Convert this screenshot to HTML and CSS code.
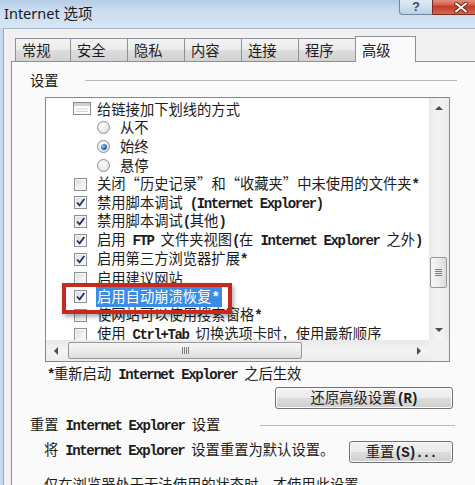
FILE: index.html
```html
<!DOCTYPE html>
<html lang="zh-CN">
<head>
    <meta charset="UTF-8">
    <title>Internet 选项</title>
    <link rel="stylesheet" href="styles.css">
</head>
<body>
    <div class="window">
        <div class="titlebar">
            <span class="title">Internet 选项</span>
            <div class="caption">
                <span class="cap-help">?</span>
                <span class="cap-close">
                    <svg width="14" height="11" viewBox="0 0 14 11">
                        <path d="M2 1.5l10 8M12 1.5l-10 8" stroke="#6e1d14" stroke-width="3.6" stroke-linecap="round"/>
                        <path d="M2 1.5l10 8M12 1.5l-10 8" stroke="#fff" stroke-width="2" stroke-linecap="round"/>
                    </svg>
                </span>
            </div>
        </div>

        <div class="frame">
            <div class="dialog">
                <div class="tabs">
                    <div class="tab first">常规</div>
                    <div class="tab">安全</div>
                    <div class="tab">隐私</div>
                    <div class="tab">内容</div>
                    <div class="tab">连接</div>
                    <div class="tab">程序</div>
                    <div class="tab active">高级</div>
                </div>

                <div class="panel">
                    <div class="group">
                        <span>设置</span>
                        <span class="rule rule-settings"></span>
                    </div>

                    <div class="list">
                        <div class="list-body">
                            <div class="rows">
                                <div class="row">
                                    <svg class="gicon" width="18" height="13" viewBox="0 0 18 13">
                                        <rect x="0.5" y="0.5" width="17" height="12" fill="#fff" stroke="#8c8c8c"/>
                                        <rect x="1" y="1" width="16" height="3" fill="#c4d2e2"/>
                                        <path d="M3 7h12M3 9.5h12" stroke="#d4d4d4"/>
                                    </svg>
                                    <span>给链接加下划线的方式</span>
                                </div>
                                <div class="row sub">
                                    <span class="radio"></span>
                                    <span>从不</span>
                                </div>
                                <div class="row sub">
                                    <span class="radio"><span class="dot"></span></span>
                                    <span>始终</span>
                                </div>
                                <div class="row sub">
                                    <span class="radio"></span>
                                    <span>悬停</span>
                                </div>
                                <div class="row">
                                    <span class="cb"></span>
                                    <span>关闭<span class="q ql">“</span>历史记录<span class="q qr">”</span>和<span class="q ql">“</span>收藏夹<span class="q qr">”</span>中未使用的文件夹<span class="lat">*</span></span>
                                </div>
                                <div class="row">
                                    <span class="cb"><svg width="11" height="11" viewBox="0 0 11 11"><path d="M2 5.5l2.6 2.8L9.3 2" fill="none" stroke="#1d3363" stroke-width="1.8"/></svg></span>
                                    <span>禁用脚本调试<span class="lat"> (Internet Explorer)</span></span>
                                </div>
                                <div class="row">
                                    <span class="cb"><svg width="11" height="11" viewBox="0 0 11 11"><path d="M2 5.5l2.6 2.8L9.3 2" fill="none" stroke="#1d3363" stroke-width="1.8"/></svg></span>
                                    <span>禁用脚本调试<span class="lat">(</span>其他<span class="lat">)</span></span>
                                </div>
                                <div class="row">
                                    <span class="cb"><svg width="11" height="11" viewBox="0 0 11 11"><path d="M2 5.5l2.6 2.8L9.3 2" fill="none" stroke="#1d3363" stroke-width="1.8"/></svg></span>
                                    <span>启用<span class="lat"> FTP </span>文件夹视图<span class="lat">(</span>在<span class="lat"> Internet Explorer </span>之外<span class="lat">)</span></span>
                                </div>
                                <div class="row">
                                    <span class="cb"><svg width="11" height="11" viewBox="0 0 11 11"><path d="M2 5.5l2.6 2.8L9.3 2" fill="none" stroke="#1d3363" stroke-width="1.8"/></svg></span>
                                    <span>启用第三方浏览器扩展<span class="lat">*</span></span>
                                </div>
                                <div class="row">
                                    <span class="cb"></span>
                                    <span>启用建议网站</span>
                                </div>
                                <div class="row marked">
                                    <span class="cb"><svg width="11" height="11" viewBox="0 0 11 11"><path d="M2 5.5l2.6 2.8L9.3 2" fill="none" stroke="#1d3363" stroke-width="1.8"/></svg></span>
                                    <span class="sel">启用自动崩溃恢复<span class="lat">*</span></span>
                                    <span class="mark"></span>
                                </div>
                                <div class="row">
                                    <span class="cb"></span>
                                    <span>使网站可以使用搜索窗格<span class="lat">*</span></span>
                                </div>
                                <div class="row">
                                    <span class="cb"></span>
                                    <span>使用<span class="lat"> Ctrl+Tab </span>切换选项卡时，使用最新顺序</span>
                                </div>
                            </div>

                            <div class="vscroll">
                                <div class="sb-btn"><span class="arr-up"></span></div>
                                <div class="v-track">
                                    <div class="v-thumb"><span class="grip-h"></span></div>
                                </div>
                                <div class="sb-btn"><span class="arr-down"></span></div>
                            </div>
                        </div>

                        <div class="hscroll">
                            <div class="hbar">
                                <div class="sb-btn"><span class="arr-left"></span></div>
                                <div class="h-track">
                                    <div class="h-thumb"><span class="grip-v"></span></div>
                                </div>
                                <div class="sb-btn"><span class="arr-right"></span></div>
                            </div>
                            <div class="corner"></div>
                        </div>
                    </div>

                    <div class="note"><span class="lat">*</span>重新启动<span class="lat"> Internet Explorer </span>之后生效</div>

                    <div class="btn-row">
                        <button class="btn btn-restore">还原高级设置<span class="lat">(R)</span></button>
                    </div>

                    <div class="group group-reset">
                        <span>重置<span class="lat"> Internet Explorer </span>设置</span>
                        <span class="rule rule-reset"></span>
                    </div>

                    <div class="reset-row">
                        <span class="reset-text">将<span class="lat"> Internet Explorer </span>设置重置为默认设置。</span>
                        <button class="btn btn-reset">重置<span class="lat">(S)...</span></button>
                    </div>

                    <p class="hint">仅在浏览器处于无法使用的状态时，才使用此设置。</p>
                </div>
            </div>
        </div>
    </div>
</body>
</html>
```

FILE: styles.css
```css
* {
    box-sizing: border-box;
}
body {
    margin: 0;
    width: 475px;
    height: 485px;
    overflow: hidden;
    background-color: #f0f0f0;
    font-family: "Noto Sans CJK SC", sans-serif;
    font-size: 14.3px;
    color: #1c1c1c;
}
.lat {
    font-family: "Liberation Mono", monospace;
    font-size: 14px;
    font-weight: bold;
    letter-spacing: -1.4px;
}
.window {
    width: 475px;
    height: 485px;
    overflow: hidden;
}

/* title bar */
.titlebar {
    height: 28px;
    display: flex;
    justify-content: space-between;
    align-items: flex-start;
    background: linear-gradient(180deg, #b4cce6 0%, #cadcf0 35%, #d8e6f5 100%);
}
.title {
    font-family: "Noto Sans", "Noto Sans CJK SC", sans-serif;
    font-size: 14.5px;
    line-height: 18px;
    padding: 4px 0 0 4px;
    color: #1a1a1a;
}
.caption {
    display: flex;
    margin-top: -4px;
    margin-right: -15px;
}
.cap-help {
    width: 33px;
    height: 19px;
    border: 1px solid #6f86a2;
    border-right: none;
    border-radius: 0 0 0 4px;
    background: linear-gradient(180deg, #e6eef8 0%, #d3e1f0 50%, #bcd0e6 100%);
    font-family: "Liberation Sans", sans-serif;
    font-weight: bold;
    font-size: 13px;
    line-height: 19px;
    text-align: center;
    color: #3b4b5e;
}
.cap-close {
    width: 58px;
    height: 19px;
    border: 1px solid #7b2b22;
    border-radius: 0 0 4px 0;
    background: linear-gradient(180deg, #e9a899 0%, #d8644f 45%, #c43a27 55%, #d06a52 100%);
    display: flex;
    justify-content: center;
    align-items: center;
    padding-top: 3px;
}

/* dialog frame */
.frame {
    display: flex;
    height: 457px;
    padding-left: 3px;
    background-color: #c6d9ee;
}
.dialog {
    flex: 1;
    background-color: #f0f0f0;
    border-left: 1px solid #98a8b9;
    border-top: 1px solid #a9b6c3;
    padding: 7px 0 0 7px;
}

/* tabs */
.tabs {
    display: flex;
    align-items: flex-end;
    height: 25px;
    padding-left: 4px;
}
.tab {
    width: 58px;
    height: 23px;
    margin-left: -1px;
    border: 1px solid #8c9097;
    border-bottom: none;
    background: linear-gradient(180deg, #f3f3f3 0%, #ebebeb 50%, #dddddd 51%, #d2d2d2 100%);
    padding-left: 6px;
    line-height: 21px;
}
.tab.first {
    width: 56px;
    margin-left: 0;
}
.tab.active {
    width: 61px;
    height: 26px;
    margin-bottom: -1px;
    padding-top: 2px;
    background: #fafafa;
    position: relative;
    z-index: 1;
}

/* panel */
.panel {
    height: 430px;
    background-color: #fafafa;
    border: 1px solid #8c9097;
    border-right: none;
    padding-left: 18px;
}
.group {
    display: flex;
    align-items: center;
    width: 427px;
    height: 20px;
    margin-top: 8px;
    line-height: 20px;
}
.rule {
    flex: 1;
    height: 1px;
    background-color: #b4b9be;
}
.rule-settings {
    margin-left: 26px;
}
.rule-reset {
    margin-left: 40px;
}
.group-reset {
    width: 425px;
    margin-top: 6px;
}

/* list box */
.list {
    width: 405px;
    height: 265px;
    margin: 7px 0 0 15px;
    border: 1px solid #84888f;
    background-color: #fff;
    display: flex;
    flex-direction: column;
}
.list-body {
    display: flex;
    height: 242px;
}
.rows {
    flex: 1;
    overflow: hidden;
    padding-top: 1.6px;
}
.row {
    display: flex;
    align-items: center;
    height: 18.8px;
    line-height: 18.8px;
    white-space: nowrap;
}
.gicon {
    margin: 0 6px 0 27px;
    flex-shrink: 0;
}
.cb {
    width: 13px;
    height: 13px;
    margin: 0 10px 0 28px;
    flex-shrink: 0;
    border: 1px solid #8e8f8f;
    background: linear-gradient(135deg, #d6d9de 0%, #f0f1f3 60%, #fbfbfb 100%);
    box-shadow: inset 0 0 0 1px #f7f7f7;
    display: flex;
    align-items: center;
    justify-content: center;
}
.radio {
    width: 13px;
    height: 13px;
    margin: 0 10px 0 51px;
    flex-shrink: 0;
    border: 1px solid #8e8f8f;
    border-radius: 50%;
    background: radial-gradient(circle at 40% 35%, #ffffff 0%, #eaeaea 55%, #cfcfcf 100%);
    display: flex;
    align-items: center;
    justify-content: center;
}
.dot {
    width: 6px;
    height: 6px;
    border-radius: 50%;
    background: radial-gradient(circle at 35% 35%, #9cc9f5 0%, #2767b8 55%, #0c3a78 100%);
}
.q {
    display: inline-block;
    width: 1em;
}
.ql {
    text-align: right;
}
.qr {
    text-align: left;
}
.marked {
    position: relative;
}
.sel {
    display: inline-block;
    line-height: 17px;
    margin-left: -1px;
    padding: 0 4px 0 1px;
    background-color: #3a8de6;
    color: #fff;
}
.mark {
    position: absolute;
    left: 16px;
    top: -5px;
    width: 170px;
    height: 31px;
    border: 4px solid #c42a20;
    box-shadow: 2px 3px 4px rgba(0, 0, 0, 0.3);
}

/* scroll bars */
.vscroll {
    width: 20px;
    display: flex;
    flex-direction: column;
    background: linear-gradient(90deg, #e9e9e9 0%, #f3f3f3 50%, #ececec 100%);
}
.sb-btn {
    width: 20px;
    height: 20px;
    flex-shrink: 0;
    display: flex;
    align-items: center;
    justify-content: center;
}
.v-track {
    flex: 1;
}
.v-thumb {
    height: 31px;
    margin: 139px 2px 0 1px;
    border: 1px solid #979797;
    border-radius: 2px;
    background: linear-gradient(90deg, #f6f6f6 0%, #ececec 50%, #dcdcdc 100%);
    display: flex;
    align-items: center;
    justify-content: center;
}
.grip-h {
    width: 7px;
    height: 7px;
    background: repeating-linear-gradient(180deg, #7d7d7d 0, #7d7d7d 1px, transparent 1px, transparent 2px);
}
.hscroll {
    display: flex;
    height: 21px;
}
.hbar {
    flex: 1;
    display: flex;
    align-items: center;
    background: linear-gradient(180deg, #e9e9e9 0%, #f3f3f3 50%, #ececec 100%);
}
.h-track {
    flex: 1;
    height: 17px;
}
.h-thumb {
    width: 234px;
    height: 17px;
    margin-left: 2px;
    border: 1px solid #979797;
    border-radius: 2px;
    background: linear-gradient(180deg, #f6f6f6 0%, #ececec 50%, #dcdcdc 100%);
    display: flex;
    align-items: center;
    justify-content: center;
}
.grip-v {
    width: 7px;
    height: 7px;
    background: repeating-linear-gradient(90deg, #7d7d7d 0, #7d7d7d 1px, transparent 1px, transparent 2px);
}
.corner {
    width: 20px;
    background-color: #f0f0f0;
}
.arr-up,
.arr-down,
.arr-left,
.arr-right {
    width: 0;
    height: 0;
    border: 4px solid transparent;
}
.arr-up {
    border-top: none;
    border-bottom-color: #4d4d4d;
}
.arr-down {
    border-bottom: none;
    border-top-color: #4d4d4d;
}
.arr-left {
    border-left: none;
    border-right-color: #4d4d4d;
}
.arr-right {
    border-right: none;
    border-left-color: #4d4d4d;
}

/* lower part */
.note {
    margin: 2px 0 0 17px;
    line-height: 18px;
}
.btn-row {
    display: flex;
    justify-content: flex-end;
    width: 423px;
    margin-top: 3px;
}
.btn {
    height: 22px;
    border: 1px solid #707070;
    border-radius: 3px;
    background: linear-gradient(180deg, #f2f2f2 0%, #ebebeb 50%, #dddddd 51%, #cfcfcf 100%);
    box-shadow: inset 0 0 0 1px #fbfbfb;
    font-family: "Noto Sans CJK SC", sans-serif;
    font-size: 14.3px;
    color: #1c1c1c;
    line-height: 18px;
    padding: 0;
}
.btn-restore {
    width: 178px;
}
.btn-reset {
    width: 104px;
    margin-top: 6px;
}
.reset-row {
    display: flex;
    justify-content: space-between;
    align-items: flex-start;
    width: 423px;
    padding-left: 14px;
}
.reset-text {
    margin-top: 5px;
    line-height: 18px;
}
.hint {
    margin: 12px 0 0 14px;
    line-height: 18px;
}
```
